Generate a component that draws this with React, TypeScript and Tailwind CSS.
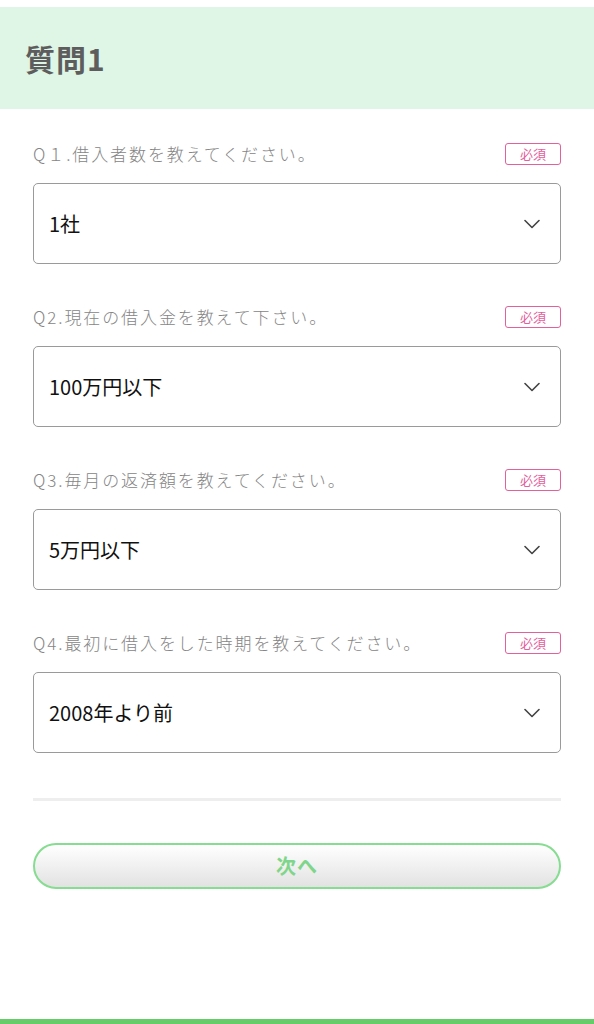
const questions = [
  { label: "Q１.借入者数を教えてください。", value: "1社" },
  { label: "Q2.現在の借入金を教えて下さい。", value: "100万円以下" },
  { label: "Q3.毎月の返済額を教えてください。", value: "5万円以下" },
  { label: "Q4.最初に借入をした時期を教えてください。", value: "2008年より前" },
];

function Chevron() {
  return (
    <svg width="16" height="10" viewBox="0 0 16 10" fill="none">
      <path d="M1 1.5 L8 8.5 L15 1.5" stroke="#444" strokeWidth="1.6" strokeLinecap="round" strokeLinejoin="round" />
    </svg>
  );
}

export default function App() {
  return (
    <div
      className="min-h-[1024px] bg-white flex flex-col"
      style={{ fontFamily: '"Noto Sans CJK JP", "Noto Sans", sans-serif' }}
    >
      <div className="mt-[7px] h-[102px] bg-[#dff5e5] flex items-center px-[25px]">
        <h1 className="text-[30px] font-bold text-[#5d5d5d] tracking-[1px]">質問1</h1>
      </div>

      <div className="px-[33px] pt-[34px] flex flex-col gap-[42px]">
        {questions.map((q) => (
          <div key={q.label} className="flex flex-col">
            <div className="flex items-center justify-between h-[22px]">
              <span className="text-[17px] font-light text-[#858585] tracking-[1.9px]">{q.label}</span>
              <span className="w-[56px] h-[22px] border border-[#e2609c] rounded-[3px] text-[#e2609c] text-[13px] flex items-center justify-center">
                必須
              </span>
            </div>
            <div className="mt-[18px] h-[81px] border border-[#9a9a9a] rounded-[5px] flex items-center justify-between pl-[15px] pr-[20px]">
              <span className="text-[20px] text-[#111]">{q.value}</span>
              <Chevron />
            </div>
          </div>
        ))}
      </div>

      <div className="mx-[33px] mt-[45px] h-[3px] bg-[#eeeeee]" />

      <div className="mx-[33px] mt-[42px] h-[46px] rounded-full border-2 border-[#86dc90] bg-gradient-to-b from-white to-[#e2e2e2] flex items-center justify-center">
        <span className="text-[20px] font-bold text-[#7fd68a] tracking-[1px]">次へ</span>
      </div>

      <div className="flex-1" />
      <div className="h-[5px] bg-[#66cc6a]" />
    </div>
  );
}
